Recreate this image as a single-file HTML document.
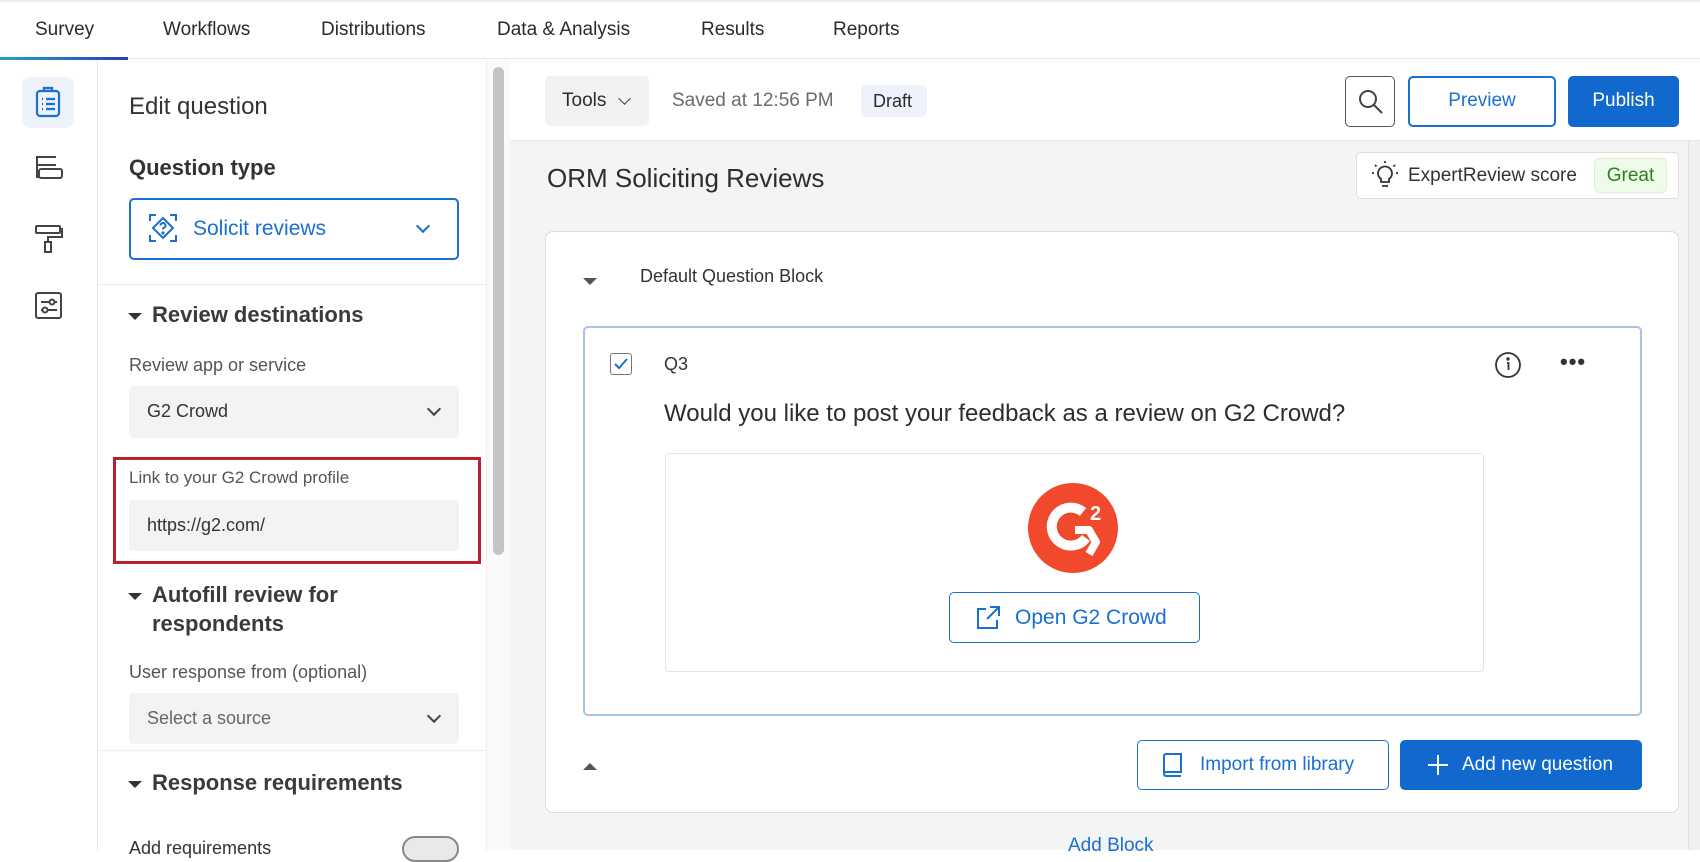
<!DOCTYPE html>
<html><head><meta charset="utf-8"><style>
*{box-sizing:border-box;margin:0;padding:0}
body{width:1700px;height:850px;overflow:hidden;background:#fff;font-family:"Liberation Sans",sans-serif;color:#2b2b2b;position:relative}
.a{position:absolute}
.t{position:absolute;white-space:nowrap}
.tab{font-size:19px;top:19px;color:#2b2b2b}
.box{position:absolute;border-radius:5px}
.lbl{font-size:18px;color:#555}
.h{font-size:22px;font-weight:bold;color:#3a3a3a}
.sel{background:#f3f3f3;border-radius:4px}
.chev{position:absolute;width:10px;height:10px;border-right:2px solid #444;border-bottom:2px solid #444;transform:rotate(45deg)}
.tri{position:absolute;width:0;height:0;border-left:7px solid transparent;border-right:7px solid transparent}
</style></head><body>
<!-- tabs -->
<div class="a" style="left:0;top:0;width:1700px;height:2px;background:#eee"></div>
<div class="t tab" style="left:35px">Survey</div>
<div class="t tab" style="left:163px">Workflows</div>
<div class="t tab" style="left:321px">Distributions</div>
<div class="t tab" style="left:497px">Data &amp; Analysis</div>
<div class="t tab" style="left:701px">Results</div>
<div class="t tab" style="left:833px">Reports</div>
<div class="a" style="left:0;top:58px;width:1700px;height:1px;background:#e6e6e6"></div>
<div class="a" style="left:0;top:57px;width:128px;height:3px;background:linear-gradient(90deg,#1fa4c4,#2a3fb0)"></div>

<!-- rail -->
<div class="a" style="left:97px;top:60px;width:1px;height:790px;background:#e8e8e8"></div>
<div class="box" style="left:22px;top:77px;width:52px;height:51px;background:#edf2fb;border-radius:8px"></div>
<svg class="a" style="left:34px;top:86px" width="28" height="32" viewBox="0 0 28 32" fill="none" stroke="#1a6fd0" stroke-width="2.2"><rect x="3" y="5" width="22" height="25" rx="3"/><path d="M10 5V2h8v3"/><path d="M8 13h1M8 18h1M8 23h1M12 13h9M12 18h9M12 23h9"/></svg>
<svg class="a" style="left:34px;top:154px" width="30" height="30" viewBox="0 0 30 30" fill="none" stroke="#444" stroke-width="2"><path d="M22 11H3V3h19"/><rect x="5" y="15" width="23" height="9" rx="2"/><path d="M3 11v12h2"/></svg>
<svg class="a" style="left:35px;top:224px" width="28" height="30" viewBox="0 0 28 30" fill="none" stroke="#444" stroke-width="2"><rect x="1" y="2" width="24" height="7" rx="1"/><path d="M25 5h2v8H13v5"/><rect x="10" y="18" width="6" height="10"/></svg>
<svg class="a" style="left:35px;top:292px" width="28" height="28" viewBox="0 0 28 28" fill="none" stroke="#444" stroke-width="2"><rect x="1" y="1" width="25" height="25" rx="2"/><path d="M6 10h16M6 18h16"/><circle cx="17" cy="10" r="2.5" fill="#fff"/><circle cx="10" cy="18" r="2.5" fill="#fff"/></svg>

<!-- left panel -->
<div class="t" style="left:129px;top:93px;font-size:24px;color:#333">Edit question</div>
<div class="t" style="left:129px;top:155px;font-size:22px;font-weight:bold;color:#333">Question type</div>
<div class="box" style="left:129px;top:198px;width:330px;height:62px;border:2px solid #1a6fd0"></div>
<svg class="a" style="left:148px;top:213px" width="30" height="30" viewBox="0 0 30 30" fill="none" stroke="#1a6fd0" stroke-width="2"><path d="M2 8V2h6M22 2h6v6M28 22v6h-6M8 28H2v-6"/><path d="M15 5l10 10-10 10L5 15z"/><path d="M12.5 12.5a2.5 2.5 0 1 1 3.5 2.3c-.8.4-1 .9-1 1.7"/><circle cx="15" cy="20" r=".6" fill="#1a6fd0"/></svg>
<div class="t" style="left:193px;top:217px;font-size:21px;color:#1a6fd0">Solicit reviews</div>
<div class="chev" style="left:418px;top:221px;border-color:#1a6fd0"></div>
<div class="a" style="left:98px;top:284px;width:388px;height:1px;background:#ececec"></div>
<div class="tri" style="left:128px;top:313px;border-top:7px solid #333"></div>
<div class="t h" style="left:152px;top:302px">Review destinations</div>
<div class="t lbl" style="left:129px;top:355px">Review app or service</div>
<div class="box sel" style="left:129px;top:386px;width:330px;height:52px"></div>
<div class="t" style="left:147px;top:401px;font-size:18px;color:#333">G2 Crowd</div>
<div class="chev" style="left:429px;top:404px"></div>
<div class="a" style="left:113px;top:457px;width:368px;height:107px;border:3px solid #b5212e"></div>
<div class="t lbl" style="left:129px;top:468px;font-size:17px">Link to your G2 Crowd profile</div>
<div class="box sel" style="left:129px;top:500px;width:330px;height:51px"></div>
<div class="t" style="left:147px;top:515px;font-size:18px;color:#333">https://g2.com/</div>
<div class="tri" style="left:128px;top:593px;border-top:7px solid #333"></div>
<div class="t h" style="left:152px;top:582px">Autofill review for</div>
<div class="t h" style="left:152px;top:611px">respondents</div>
<div class="t lbl" style="left:129px;top:662px">User response from (optional)</div>
<div class="box sel" style="left:129px;top:693px;width:330px;height:51px"></div>
<div class="t" style="left:147px;top:708px;font-size:18px;color:#666">Select a source</div>
<div class="chev" style="left:429px;top:711px"></div>
<div class="a" style="left:98px;top:750px;width:388px;height:1px;background:#ececec"></div>
<div class="tri" style="left:128px;top:781px;border-top:7px solid #333"></div>
<div class="t h" style="left:152px;top:770px">Response requirements</div>
<div class="t lbl" style="left:129px;top:838px;color:#333">Add requirements</div>
<div class="box" style="left:402px;top:836px;width:57px;height:26px;border-radius:13px;background:#e9e9e9;border:2px solid #888"></div>
<!-- scrollbar -->
<div class="a" style="left:486px;top:60px;width:24px;height:790px;background:#fafafa;border-left:1px solid #eee"></div>
<div class="box" style="left:493px;top:67px;width:11px;height:488px;background:#c4c4c4;border-radius:6px"></div>

<!-- main -->
<div class="a" style="left:510px;top:141px;width:1190px;height:709px;background:#f4f4f4"></div>
<div class="a" style="left:510px;top:140px;width:1190px;height:1px;background:#e6e6e6"></div>
<div class="box" style="left:545px;top:76px;width:104px;height:50px;background:#f2f2f2"></div>
<div class="t" style="left:562px;top:90px;font-size:19px">Tools</div>
<div class="chev" style="left:620px;top:94px;width:9px;height:9px;border-width:1.8px"></div>
<div class="t" style="left:672px;top:90px;font-size:19px;color:#6b6b6b">Saved at 12:56 PM</div>
<div class="box" style="left:861px;top:85px;width:66px;height:32px;background:#edf2fb"></div>
<div class="t" style="left:873px;top:91px;font-size:18px">Draft</div>
<div class="box" style="left:1345px;top:76px;width:50px;height:51px;border:1.5px solid #555"></div>
<svg class="a" style="left:1357px;top:88px" width="28" height="28" viewBox="0 0 28 28" fill="none" stroke="#444" stroke-width="2"><circle cx="11" cy="11" r="8"/><path d="M17 17l8 8"/></svg>
<div class="box" style="left:1408px;top:76px;width:148px;height:51px;border:2px solid #1a6fd0"></div>
<div class="t" style="left:1408px;top:90px;width:148px;text-align:center;font-size:19px;color:#1a6fd0">Preview</div>
<div class="box" style="left:1568px;top:76px;width:111px;height:51px;background:#1169cd"></div>
<div class="t" style="left:1568px;top:90px;width:111px;text-align:center;font-size:19px;color:#fff">Publish</div>

<div class="t" style="left:547px;top:163px;font-size:26px;color:#2d2d2d">ORM Soliciting Reviews</div>
<div class="box" style="left:1356px;top:152px;width:323px;height:47px;background:#fff;border:1.5px solid #ddd"></div>
<svg class="a" style="left:1371px;top:161px" width="28" height="28" viewBox="0 0 28 28" fill="none" stroke="#333" stroke-width="1.8"><path d="M10 21v-3c-2-1.5-3-3-3-5.5a7 7 0 0 1 14 0c0 2.5-1 4-3 5.5v3zM11 25h6"/><path d="M1 12h2M25 12h2M4 4l1.5 1.5M24 4l-1.5 1.5M14 0v2"/></svg>
<div class="t" style="left:1408px;top:165px;font-size:19px;color:#333">ExpertReview score</div>
<div class="box" style="left:1594px;top:158px;width:73px;height:35px;background:#eefbe9;border:1px solid #dcefd4"></div>
<div class="t" style="left:1594px;top:165px;width:73px;text-align:center;font-size:19px;color:#2f7d20">Great</div>

<div class="box" style="left:545px;top:231px;width:1134px;height:582px;background:#fff;border:1.5px solid #dcdcdc;border-radius:8px"></div>
<div class="tri" style="left:583px;top:278px;border-left-width:7px;border-right-width:7px;border-top:7px solid #555"></div>
<div class="t" style="left:640px;top:266px;font-size:18px;color:#333">Default Question Block</div>

<div class="box" style="left:583px;top:326px;width:1059px;height:390px;border:2px solid #a6c4e6;border-radius:5px"></div>
<div class="box" style="left:610px;top:353px;width:22px;height:22px;border:1.5px solid #777;border-radius:3px"></div>
<svg class="a" style="left:613px;top:357px" width="16" height="14" viewBox="0 0 16 14" fill="none" stroke="#1a6fd0" stroke-width="2"><path d="M2 7l4 4 8-9"/></svg>
<div class="t" style="left:664px;top:354px;font-size:18px;color:#333">Q3</div>
<svg class="a" style="left:1494px;top:351px" width="28" height="28" viewBox="0 0 28 28" fill="none" stroke="#333" stroke-width="1.8"><circle cx="14" cy="14" r="12"/><path d="M13 12h1.5v7"/><circle cx="14" cy="8" r=".8" fill="#333"/></svg>
<div class="t" style="left:1560px;top:349px;font-size:22px;font-weight:bold;letter-spacing:1px;color:#333">•••</div>
<div class="t" style="left:664px;top:400px;font-size:24px;color:#2d2d2d">Would you like to post your feedback as a review on G2 Crowd?</div>
<div class="box" style="left:665px;top:453px;width:819px;height:219px;border:1.5px solid #e4e4e4;border-radius:4px"></div>
<svg class="a" style="left:1027px;top:482px" width="92" height="92" viewBox="0 0 92 92"><circle cx="46" cy="46" r="45" fill="#f1492b"/><path d="M56 30A19 19 0 1 0 59 56" fill="none" stroke="#fff" stroke-width="10"/><path d="M48 48h14l7 12-7 12" fill="none" stroke="#fff" stroke-width="8" stroke-linejoin="round"/><text x="63" y="38" font-family="Liberation Sans" font-weight="bold" font-size="20" fill="#fff">2</text></svg>
<div class="box" style="left:949px;top:592px;width:251px;height:51px;border:1.5px solid #1a6fd0"></div>
<svg class="a" style="left:975px;top:605px" width="26" height="26" viewBox="0 0 26 26" fill="none" stroke="#1a6fd0" stroke-width="2"><path d="M11 4H3v19h19v-8M15 2h9v9M24 2L12 14"/></svg>
<div class="t" style="left:1015px;top:606px;font-size:21px;color:#1a6fd0">Open G2 Crowd</div>

<div class="tri" style="left:583px;top:763px;border-bottom:7px solid #555"></div>
<div class="box" style="left:1137px;top:740px;width:252px;height:50px;border:1.5px solid #1a6fd0"></div>
<svg class="a" style="left:1160px;top:752px" width="24" height="28" viewBox="0 0 24 28" fill="none" stroke="#1a6fd0" stroke-width="2"><path d="M4 22V4a2 2 0 0 1 2-2h15v18H6a2 2 0 0 0 0 4h15"/></svg>
<div class="t" style="left:1200px;top:754px;font-size:19px;color:#1a6fd0">Import from library</div>
<div class="box" style="left:1400px;top:740px;width:242px;height:50px;background:#1169cd"></div>
<svg class="a" style="left:1426px;top:753px" width="24" height="24" viewBox="0 0 24 24" stroke="#fff" stroke-width="2"><path d="M12 2v20M2 12h20"/></svg>
<div class="t" style="left:1462px;top:754px;font-size:19px;color:#fff">Add new question</div>
<div class="t" style="left:1068px;top:835px;font-size:19px;color:#1a6fd0">Add Block</div>
<div class="a" style="left:1688px;top:141px;width:12px;height:709px;background:#f0f0f0;border-left:1px solid #e2e2e2"></div>
</body></html>
